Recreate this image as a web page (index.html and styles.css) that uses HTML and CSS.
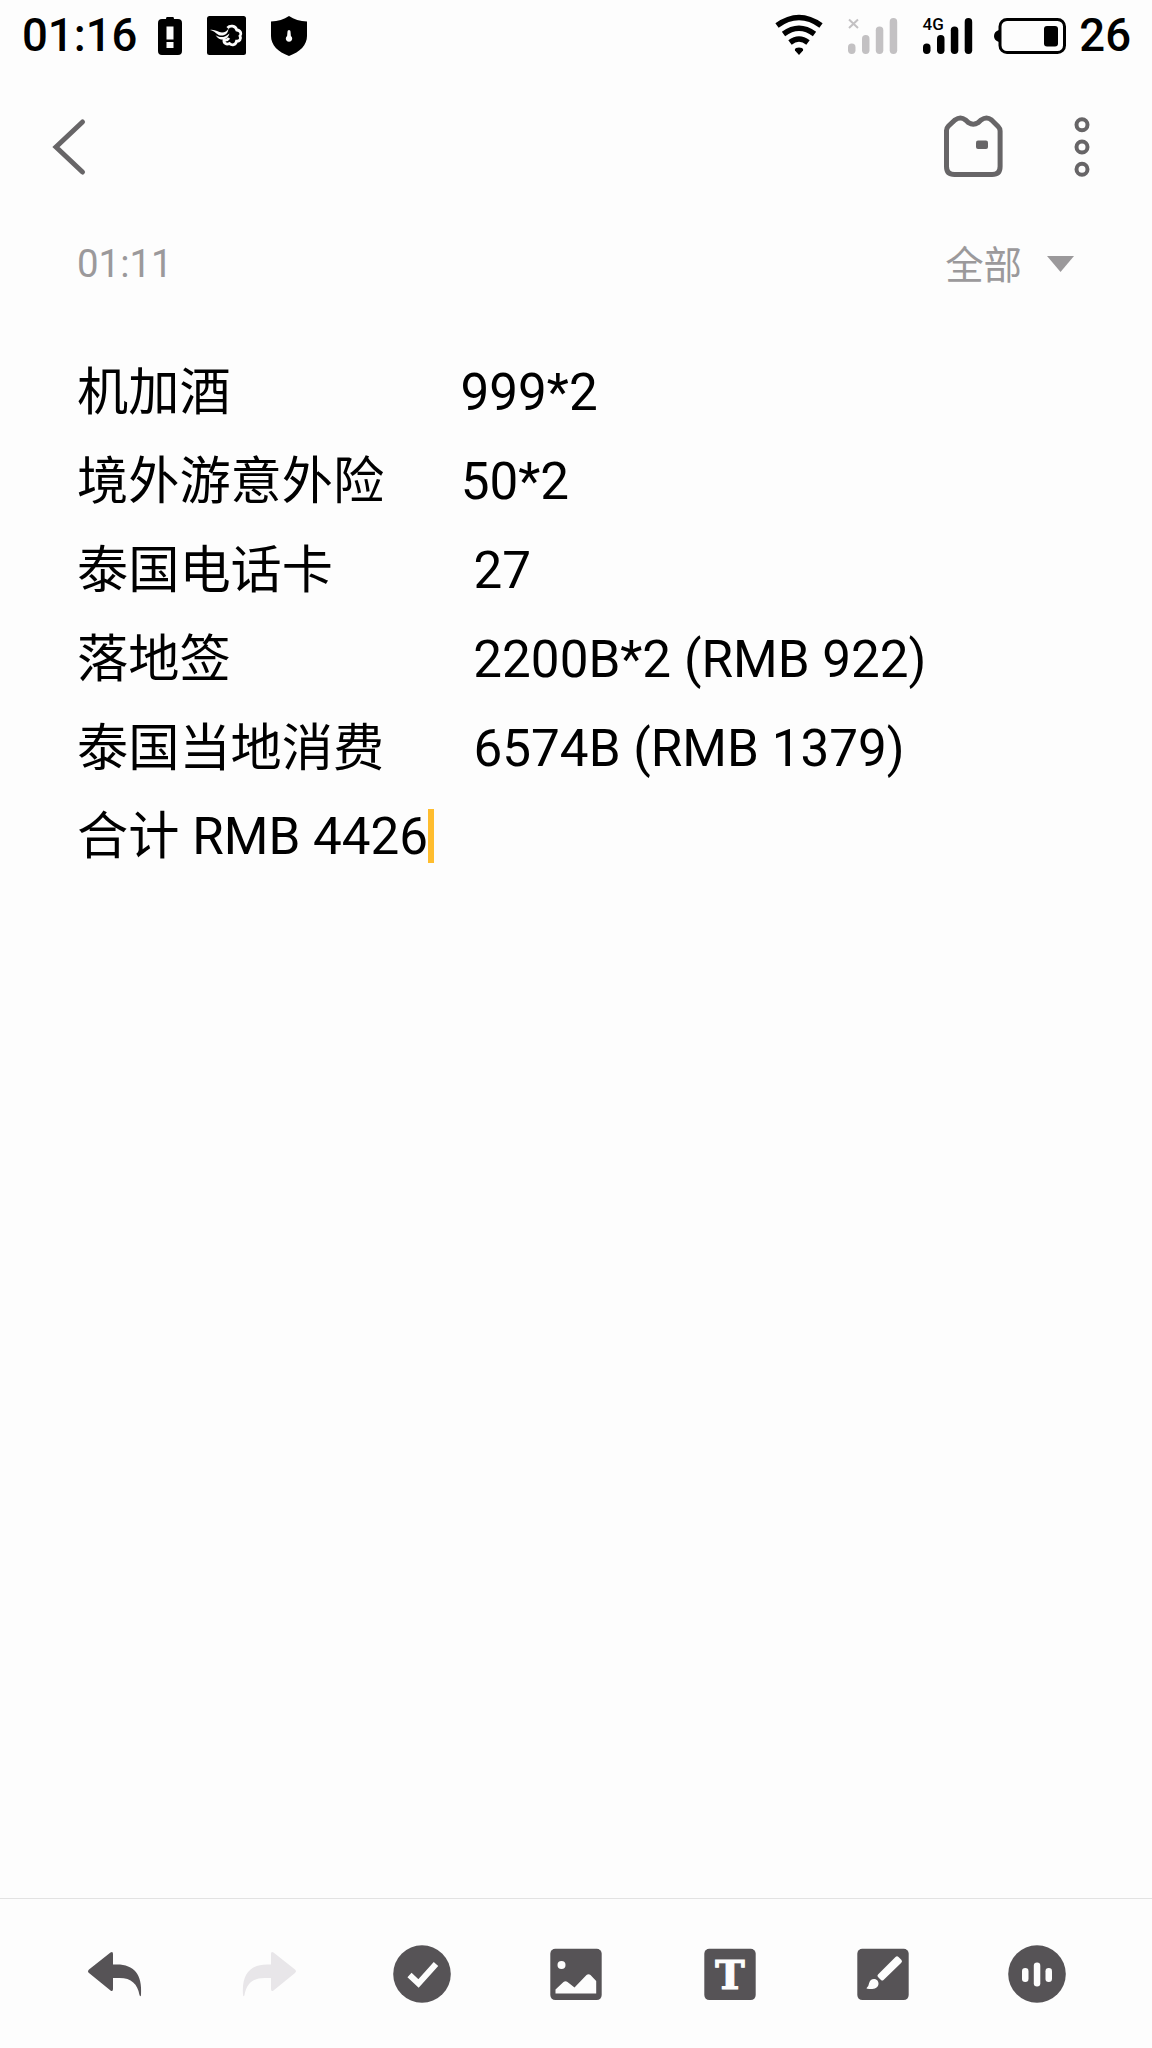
FILE: index.html
```
<!DOCTYPE html>
<html lang="zh-CN">
<head>
  <meta charset="UTF-8">
  <meta name="viewport" content="width=device-width, initial-scale=1.0">
  <title>便签</title>
  <link rel="stylesheet" href="styles.css">
</head>
<body>
  <div class="status-bar">
    <div class="status-left">
      <span class="clock">01:16</span>
      <svg class="icon-alert" width="24" height="38" viewBox="0 0 24 38">
        <path d="M9 0h6q1 0 1 2h4q4 0 4 4v28q0 4-4 4H4q-4 0-4-4V6q0-4 4-4h4q0-2 1-2z"/>
        <path class="cut" d="M8.5 9.500h7v13h-7zM8.500 25h7v6h-7z"/>
      </svg>
      <svg class="icon-wind" width="39" height="39" viewBox="0 0 39 39">
        <rect width="39" height="39" rx="2.500"/>
        <path class="cut" d="M3 14c5-1 8 2.500 12 2.500 3 0 5-1.500 6.500-4-.3 5-3.500 7.500-8 7-4-.5-5-4.500-10.500-5.500z"/>
        <path class="cut" d="M8.500 19c4 3 9 3 14-1.500-1.500 5-5 6.500-8.500 6-3-.5-4-2.500-5.500-4.500z"/>
        <path class="line" d="M20.500 12c2.500-3 8-2.500 9.300 2 4 .3 5 4 3.200 6 1.500 3-.5 5.500-3.500 5.200-.8 4-4.500 4.500-7 2.300-3.300 1.500-6-.5-5.500-3.500 2 .5 4-.5 5-2"/>
      </svg>
      <svg class="icon-shield" width="36" height="40" viewBox="0 0 36 40">
        <path d="M18 0c5 3.500 11 5 18 5.500V20c0 9-7 16-18 20C7 36 0 29 0 20V5.500C7 5 13 3.500 18 0z"/>
        <path class="cut" d="M16.500 15.500a1.500 1.500 0 0 1 3 0l.4 4.500a3.200 3.200 0 1 1-3.800 0z"/>
      </svg>
    </div>
    <div class="status-right">
      <svg class="icon-wifi" width="48" height="41" viewBox="0 0 48 41">
        <path d="M2 10.500Q24-5.500 46 10.500M8.500 19Q24 7.500 39.500 19M15 27.500Q24 20.500 33 27.500"/>
        <path class="dot" d="M24 40l-4-4.500q-.8-1.500 1-2.500 3-1.200 6 0 1.800 1 1 2.500z"/>
      </svg>
      <svg class="icon-signal off" width="50" height="36" viewBox="0 0 50 36">
        <path class="cross" d="M1 1.500l9 8.500M10 1.500L1 10"/>
        <rect x="0" y="25.500" width="7.500" height="10.500" rx="3.700"/>
        <rect x="14" y="17" width="7.500" height="19" rx="3.700"/>
        <rect x="27.800" y="8.500" width="7.500" height="27.500" rx="3.700"/>
        <rect x="41.700" y="0" width="7.500" height="36" rx="3.700"/>
      </svg>
      <svg class="icon-signal" width="50" height="36" viewBox="0 0 50 36">
        <text x="-0.500" y="12">4G</text>
        <rect x="0" y="25.500" width="7.500" height="10.500" rx="3.700"/>
        <rect x="14" y="17" width="7.500" height="19" rx="3.700"/>
        <rect x="27.800" y="8.500" width="7.500" height="27.500" rx="3.700"/>
        <rect x="41.700" y="0" width="7.500" height="36" rx="3.700"/>
      </svg>
      <svg class="icon-battery" width="72" height="36" viewBox="0 0 72 36">
        <rect class="shell" x="6" y="1.500" width="64.500" height="33" rx="7"/>
        <path d="M5 12v12q-5-1.500-5-6t5-6z"/>
        <rect x="50" y="8" width="14" height="20.500" rx="3"/>
      </svg>
      <span class="level">26</span>
    </div>
  </div>

  <div class="header">
    <svg width="34" height="56" viewBox="0 0 34 56">
      <path d="M29.500 3L3 28l26.500 25"/>
    </svg>
    <div class="header-actions">
      <svg width="59" height="63" viewBox="0 0 59 63">
        <path d="M2.500 15.500q0-2.500 2-4.500l6.500-6q5.500-4 10.500 0l3 2.700q4.800 3 9.600 0l3-2.700q5.500-4 10.500 0l6.500 6.500q2 2 2 4.500v35.500q0 8-8 8H10.500q-8 0-8-8z"/>
        <rect class="solid" x="32" y="25.500" width="12" height="8.500" rx="2"/>
      </svg>
      <svg width="16" height="60" viewBox="0 0 16 60">
        <circle cx="8" cy="7.700" r="5.500"/>
        <circle cx="8" cy="30" r="5.500"/>
        <circle cx="8" cy="52.300" r="5.500"/>
      </svg>
    </div>
  </div>

  <div class="meta">
    <span>01:11</span>
    <div class="folder">
      <span class="folder-name">全部</span>
      <svg width="27" height="16" viewBox="0 0 27 16">
        <path d="M0 0h27L13.500 16z"/>
      </svg>
    </div>
  </div>

  <div class="note">
    <p>机加酒                  999*2</p>
    <p>境外游意外险      50*2</p>
    <p>泰国电话卡           27</p>
    <p>落地签                   2200B*2 (RMB 922)</p>
    <p>泰国当地消费       6574B (RMB 1379)</p>
    <p>合计 RMB 4426<span class="cursor"></span></p>
  </div>

  <div class="toolbar">
    <button>
      <svg viewBox="0 0 60 60">
        <path d="M4 25.500L25.500 8.500q2.500-1.500 2.500 1.500v10.500h4c17 0 25.500 10 24 30.500q-.5 2.500-1.500 0c-2-11-8-17-20-17H28v11q0 3-2.500 1.500L4 29q-2-1.700 0-3.500z"/>
      </svg>
    </button>
    <button class="disabled">
      <svg viewBox="0 0 60 60">
        <path d="M56 25.500L34.500 8.500q-2.500-1.500-2.500 1.500v10.500h-4C11 20.500 2.500 30.500 4 51q.5 2.500 1.500 0c2-11 8-17 20-17H32v11q0 3 2.500 1.500L56 29q2-1.700 0-3.500z"/>
      </svg>
    </button>
    <button>
      <svg viewBox="0 0 60 60">
        <circle cx="30" cy="30" r="28.800"/>
        <path class="check" d="M17.500 31l9 8.500 17.500-19.500"/>
      </svg>
    </button>
    <button>
      <svg viewBox="0 0 60 60">
        <rect x="4.300" y="4.700" width="51.400" height="51.400" rx="5"/>
        <circle class="cut" cx="15.500" cy="21" r="4"/>
        <path class="cut" d="M9.500 49.500v-4l8-7.500q2-1.500 4 0l7 5.500L40.500 31q2-1.500 4 0l5.700 6v12.500z"/>
      </svg>
    </button>
    <button>
      <svg viewBox="0 0 60 60">
        <rect x="4.300" y="4.700" width="51.400" height="51.400" rx="5"/>
        <text class="cut" x="30" y="44.800">T</text>
      </svg>
    </button>
    <button>
      <svg viewBox="0 0 60 60">
        <rect x="4.300" y="4.700" width="51.400" height="51.400" rx="5"/>
        <path class="cut" d="M42.500 13q1.500-1.500 3 0l2.800 2.800q1.500 1.500 0 3L30.500 36q-1.200 1.200-2.500 0l-3-3q-1.200-1.200 0-2.500zM14 43.500q1.500-1 2-4c1.500-7 10-5 9.500.5-.5 4.500-5 5.500-11 4.800-1 0-1.200-.8-.5-1.300z"/>
      </svg>
    </button>
    <button>
      <svg viewBox="0 0 60 60">
        <circle cx="30" cy="30" r="28.800"/>
        <rect class="cut" x="15" y="24" width="6.500" height="14" rx="3.200"/>
        <rect class="cut" x="26.800" y="18.500" width="6.500" height="24" rx="3.200"/>
        <rect class="cut" x="38.500" y="24" width="6.500" height="14" rx="3.200"/>
      </svg>
    </button>
  </div>
</body>
</html>
```

FILE: styles.css
```
* {
  box-sizing: border-box;
}
body {
  margin: 0;
  height: 100vh;
  display: flex;
  flex-direction: column;
  background-color: #fdfdfd;
  color: #000;
  font-family: Roboto, "Noto Sans CJK SC", sans-serif;
}
svg {
  display: block;
  overflow: visible;
}
.cut {
  fill: #fdfdfd;
}

/* status bar */
.status-bar {
  height: 71px;
  padding: 0 21px 0 22px;
  display: flex;
  justify-content: space-between;
  align-items: center;
  font-size: 45.500px;
  font-weight: 500;
}
.status-left,
.status-right {
  display: flex;
  align-items: center;
}
.clock {
  width: 136px;
}
.icon-wind {
  margin-left: 25px;
}
.icon-wind .line {
  fill: none;
  stroke: #fdfdfd;
  stroke-width: 2.800;
}
.icon-shield {
  margin-left: 25px;
}
.icon-wifi {
  fill: none;
  stroke: #000;
  stroke-width: 5.500;
}
.icon-wifi .dot {
  fill: #000;
  stroke: none;
}
.icon-signal {
  margin-left: 25px;
}
.icon-signal text {
  font-size: 17px;
  font-weight: 500;
}
.off {
  fill: #c3c1c3;
}
.off .cross {
  stroke: #c3c1c3;
  stroke-width: 2;
}
.icon-battery {
  margin: 0 13px 0 21px;
}
.icon-battery .shell {
  fill: none;
  stroke: #000;
  stroke-width: 3;
}

/* header */
.header {
  height: 151px;
  padding: 0 62px 0 53px;
  display: flex;
  justify-content: space-between;
  align-items: center;
  fill: none;
  stroke: #676567;
  stroke-width: 5;
  stroke-linecap: round;
}
.header-actions {
  display: flex;
  align-items: center;
  gap: 71px;
}
.header-actions circle {
  stroke-width: 4;
}
.header .solid {
  fill: #676567;
  stroke: none;
}

/* date and folder */
.meta {
  height: 83px;
  padding: 0 78px 0 77px;
  display: flex;
  justify-content: space-between;
  align-items: center;
  font-size: 38.400px;
  color: #9b999b;
  fill: #9b999b;
}
.folder {
  display: flex;
  align-items: center;
  gap: 25px;
}
.folder-name {
  padding-bottom: 4px;
}

/* note text */
.note {
  flex: 1;
  padding: 44px 77px;
  font-size: 51.200px;
  line-height: 88.900px;
  word-spacing: 0.080px;
}
.note p {
  margin: 0;
  height: 88.900px;
  white-space: pre;
}
.cursor {
  display: inline-block;
  width: 6px;
  height: 54px;
  vertical-align: -9px;
  background-color: #ffbd2e;
}

/* toolbar */
.toolbar {
  height: 150px;
  padding: 0 38.400px;
  display: flex;
  border-top: 1px solid #e2e2e2;
}
.toolbar button {
  flex: 1;
  padding: 0;
  border: none;
  background: none;
  display: flex;
  justify-content: center;
  align-items: center;
  fill: #565356;
}
.toolbar svg {
  width: 60px;
  height: 60px;
}
.toolbar .disabled {
  fill: #e8e6e9;
}
.toolbar text {
  font-family: "DejaVu Serif", serif;
  font-size: 39.500px;
  font-weight: bold;
  text-anchor: middle;
  stroke: #fdfdfd;
  stroke-width: 1.200;
}
.check {
  fill: none;
  stroke: #fdfdfd;
  stroke-width: 6;
}
```
